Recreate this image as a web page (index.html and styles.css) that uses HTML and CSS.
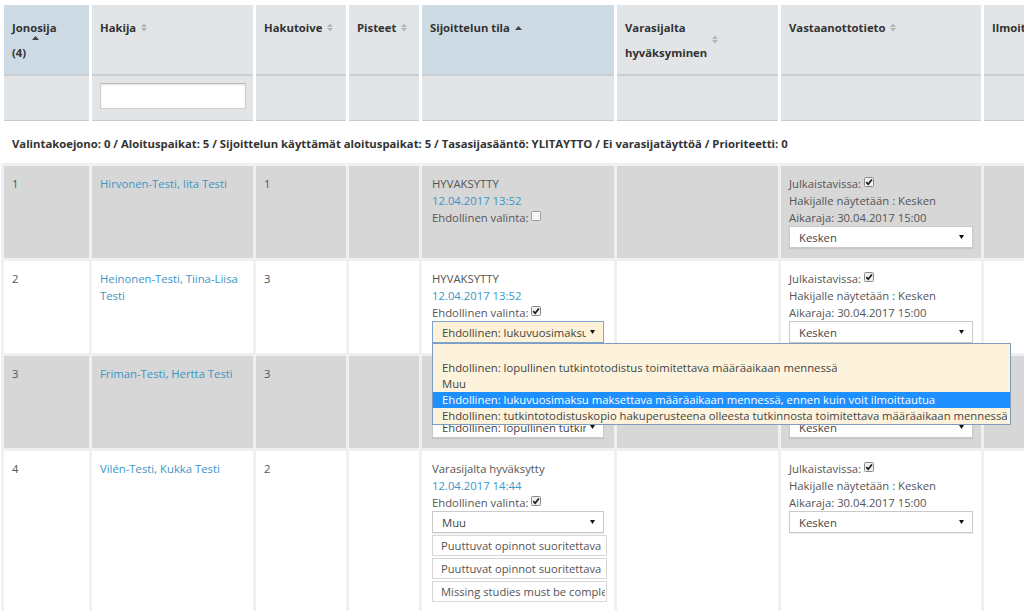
FILE: index.html
```html
<!DOCTYPE html>
<html lang="fi">
<head>
<meta charset="UTF-8" />
<title>Sijoittelun tulokset</title>
<link rel="stylesheet" href="styles.css">
</head>
<body>

<div class="page">
  <table class="grid head">
    <colgroup>
      <col class="c-jono"><col class="c-hakija"><col class="c-toive"><col class="c-pisteet">
      <col class="c-tila"><col class="c-vara"><col class="c-vast"><col class="c-ilmo">
    </colgroup>
    <tr class="titles">
      <th class="sorted">Jonosija<br>(4)
        <svg class="sort-abs sort-jono" width="7" height="4" viewBox="0 0 7 4"><path d="M0 4 L3.5 0 L7 4 Z" fill="#444"/></svg>
      </th>
      <th>Hakija <svg class="sort" width="6" height="9" viewBox="0 0 6 9"><path d="M0 4 L3 0.5 L6 4 Z M0 5 L3 8.5 L6 5 Z" fill="#b5b5b5"/></svg></th>
      <th>Hakutoive <svg class="sort" width="6" height="9" viewBox="0 0 6 9"><path d="M0 4 L3 0.5 L6 4 Z M0 5 L3 8.5 L6 5 Z" fill="#b5b5b5"/></svg></th>
      <th>Pisteet <svg class="sort" width="6" height="9" viewBox="0 0 6 9"><path d="M0 4 L3 0.5 L6 4 Z M0 5 L3 8.5 L6 5 Z" fill="#b5b5b5"/></svg></th>
      <th class="sorted">Sijoittelun tila <svg class="sort" width="7" height="4" viewBox="0 0 7 4"><path d="M0 4 L3.5 0 L7 4 Z" fill="#444"/></svg></th>
      <th>Varasijalta<br>hyväksyminen
        <svg class="sort-abs sort-vara" width="6" height="9" viewBox="0 0 6 9"><path d="M0 4 L3 0.5 L6 4 Z M0 5 L3 8.5 L6 5 Z" fill="#b5b5b5"/></svg>
      </th>
      <th>Vastaanottotieto <svg class="sort" width="6" height="9" viewBox="0 0 6 9"><path d="M0 4 L3 0.5 L6 4 Z M0 5 L3 8.5 L6 5 Z" fill="#b5b5b5"/></svg></th>
      <th>Ilmoittautumistila</th>
    </tr>
    <tr class="filters">
      <th></th>
      <th><input type="text" class="filter-input" /></th>
      <th></th><th></th><th></th><th></th><th></th><th></th>
    </tr>
  </table>

  <div class="queue-info">Valintakoejono: 0 / Aloituspaikat: 5 / Sijoittelun käyttämät aloituspaikat: 5 / Tasasijasääntö: YLITAYTTO / Ei varasijatäyttöä / Prioriteetti: 0</div>

  <table class="grid results">
    <colgroup>
      <col class="c-jono"><col class="c-hakija"><col class="c-toive"><col class="c-pisteet">
      <col class="c-tila"><col class="c-vara"><col class="c-vast"><col class="c-ilmo">
    </colgroup>

    <tr class="odd">
      <td>1</td>
      <td><a href="#">Hirvonen-Testi, Iita Testi</a></td>
      <td>1</td>
      <td></td>
      <td class="tila">
        <div>HYVAKSYTTY</div>
        <div class="date">12.04.2017 13:52</div>
        <div>Ehdollinen valinta: <svg class="cb" width="10" height="10" viewBox="0 0 10 10"><rect x=".5" y=".5" width="9" height="9" rx="1" fill="#f6f6f6" stroke="#9a9a9a"/></svg></div>
      </td>
      <td></td>
      <td>
        <div>Julkaistavissa: <svg class="cb" width="10" height="10" viewBox="0 0 10 10"><rect x=".5" y=".5" width="9" height="9" rx="1" fill="#f0f0f0" stroke="#8a8a8a"/><path d="M2.3 5.1 L4.2 7.2 L7.9 2.5" fill="none" stroke="#1a1a1a" stroke-width="1.7"/></svg></div>
        <div>Hakijalle näytetään : Kesken</div>
        <div>Aikaraja: 30.04.2017 15:00</div>
        <div class="select"><span class="select-text">Kesken</span><svg class="caret" width="5" height="4" viewBox="0 0 5 4"><path d="M0 0 L5 0 L2.5 4 Z" fill="#111"/></svg></div>
      </td>
      <td></td>
    </tr>

    <tr>
      <td>2</td>
      <td><a href="#">Heinonen-Testi, Tiina-Liisa Testi</a></td>
      <td>3</td>
      <td></td>
      <td class="tila">
        <div>HYVAKSYTTY</div>
        <div class="date">12.04.2017 13:52</div>
        <div>Ehdollinen valinta: <svg class="cb" width="10" height="10" viewBox="0 0 10 10"><rect x=".5" y=".5" width="9" height="9" rx="1" fill="#f0f0f0" stroke="#8a8a8a"/><path d="M2.3 5.1 L4.2 7.2 L7.9 2.5" fill="none" stroke="#1a1a1a" stroke-width="1.7"/></svg></div>
        <div class="select-wrap">
          <div class="select focused"><span class="select-text">Ehdollinen: lukuvuosimaksu maksettava määräaikaan mennessä</span><svg class="caret" width="5" height="4" viewBox="0 0 5 4"><path d="M0 0 L5 0 L2.5 4 Z" fill="#111"/></svg></div>
          <ul class="options">
            <li>&nbsp;</li>
            <li>Ehdollinen: lopullinen tutkintotodistus toimitettava määräaikaan mennessä</li>
            <li>Muu</li>
            <li class="active">Ehdollinen: lukuvuosimaksu maksettava määräaikaan mennessä, ennen kuin voit ilmoittautua</li>
            <li>Ehdollinen: tutkintotodistuskopio hakuperusteena olleesta tutkinnosta toimitettava määräaikaan mennessä</li>
          </ul>
        </div>
      </td>
      <td></td>
      <td>
        <div>Julkaistavissa: <svg class="cb" width="10" height="10" viewBox="0 0 10 10"><rect x=".5" y=".5" width="9" height="9" rx="1" fill="#f0f0f0" stroke="#8a8a8a"/><path d="M2.3 5.1 L4.2 7.2 L7.9 2.5" fill="none" stroke="#1a1a1a" stroke-width="1.7"/></svg></div>
        <div>Hakijalle näytetään : Kesken</div>
        <div>Aikaraja: 30.04.2017 15:00</div>
        <div class="select"><span class="select-text">Kesken</span><svg class="caret" width="5" height="4" viewBox="0 0 5 4"><path d="M0 0 L5 0 L2.5 4 Z" fill="#111"/></svg></div>
      </td>
      <td></td>
    </tr>

    <tr class="odd">
      <td>3</td>
      <td><a href="#">Friman-Testi, Hertta Testi</a></td>
      <td>3</td>
      <td></td>
      <td class="tila">
        <div>HYVAKSYTTY</div>
        <div class="date">12.04.2017 13:52</div>
        <div>Ehdollinen valinta: <svg class="cb" width="10" height="10" viewBox="0 0 10 10"><rect x=".5" y=".5" width="9" height="9" rx="1" fill="#f0f0f0" stroke="#8a8a8a"/><path d="M2.3 5.1 L4.2 7.2 L7.9 2.5" fill="none" stroke="#1a1a1a" stroke-width="1.7"/></svg></div>
        <div class="select"><span class="select-text">Ehdollinen: lopullinen tutkintotodistus</span><svg class="caret" width="5" height="4" viewBox="0 0 5 4"><path d="M0 0 L5 0 L2.5 4 Z" fill="#111"/></svg></div>
      </td>
      <td></td>
      <td>
        <div>Julkaistavissa: <svg class="cb" width="10" height="10" viewBox="0 0 10 10"><rect x=".5" y=".5" width="9" height="9" rx="1" fill="#f0f0f0" stroke="#8a8a8a"/><path d="M2.3 5.1 L4.2 7.2 L7.9 2.5" fill="none" stroke="#1a1a1a" stroke-width="1.7"/></svg></div>
        <div>Hakijalle näytetään : Kesken</div>
        <div>Aikaraja: 30.04.2017 15:00</div>
        <div class="select"><span class="select-text">Kesken</span><svg class="caret" width="5" height="4" viewBox="0 0 5 4"><path d="M0 0 L5 0 L2.5 4 Z" fill="#111"/></svg></div>
      </td>
      <td></td>
    </tr>

    <tr>
      <td>4</td>
      <td><a href="#">Vilén-Testi, Kukka Testi</a></td>
      <td>2</td>
      <td></td>
      <td class="tila">
        <div>Varasijalta hyväksytty</div>
        <div class="date">12.04.2017 14:44</div>
        <div>Ehdollinen valinta: <svg class="cb" width="10" height="10" viewBox="0 0 10 10"><rect x=".5" y=".5" width="9" height="9" rx="1" fill="#f0f0f0" stroke="#8a8a8a"/><path d="M2.3 5.1 L4.2 7.2 L7.9 2.5" fill="none" stroke="#1a1a1a" stroke-width="1.7"/></svg></div>
        <div class="select"><span class="select-text">Muu</span><svg class="caret" width="5" height="4" viewBox="0 0 5 4"><path d="M0 0 L5 0 L2.5 4 Z" fill="#111"/></svg></div>
        <input type="text" class="reason" value="Puuttuvat opinnot suoritettava määräaikaan mennessä" />
        <input type="text" class="reason" value="Puuttuvat opinnot suoritettava määräaikaan mennessä" />
        <input type="text" class="reason" value="Missing studies must be completed by the deadline" />
      </td>
      <td></td>
      <td>
        <div>Julkaistavissa: <svg class="cb" width="10" height="10" viewBox="0 0 10 10"><rect x=".5" y=".5" width="9" height="9" rx="1" fill="#f0f0f0" stroke="#8a8a8a"/><path d="M2.3 5.1 L4.2 7.2 L7.9 2.5" fill="none" stroke="#1a1a1a" stroke-width="1.7"/></svg></div>
        <div>Hakijalle näytetään : Kesken</div>
        <div>Aikaraja: 30.04.2017 15:00</div>
        <div class="select"><span class="select-text">Kesken</span><svg class="caret" width="5" height="4" viewBox="0 0 5 4"><path d="M0 0 L5 0 L2.5 4 Z" fill="#111"/></svg></div>
      </td>
      <td></td>
    </tr>
  </table>
</div>

</body>
</html>
```

FILE: styles.css
```css
* {
  box-sizing: border-box;
}
body {
  margin: 0;
  font-family: 'Open Sans', 'Noto Sans', sans-serif;
  font-size: 11.3px;
  color: #555;
  background: #fff;
  overflow: hidden;
}
.page {
  width: 1024px;
  height: 611px;
  overflow: hidden;
  padding: 5px 0 0 1px;
}
.grid {
  table-layout: fixed;
  width: 1136px;
}
.c-jono { width: 85px; }
.c-hakija { width: 161px; }
.c-toive { width: 90px; }
.c-pisteet { width: 70px; }
.c-tila { width: 192px; }
.c-vara { width: 161px; }
.c-vast { width: 200px; }
.c-ilmo { width: 150px; }

/* header */
.head {
  border-collapse: separate;
  border-spacing: 3px 0;
}
.head th {
  text-align: left;
  vertical-align: top;
  font-weight: 700;
  color: #333;
  background-color: #dfe2e4;
  background-image: repeating-conic-gradient(rgba(255, 255, 255, 0.18) 0 25%, transparent 0 50%);
  background-size: 2px 2px;
  position: relative;
  white-space: nowrap;
  overflow: hidden;
}
.titles th {
  padding: 10px 8px 7px;
  line-height: 25px;
  height: 71px;
  border-bottom: 2px solid #cbced0;
}
.titles th.sorted {
  background-color: #c8d7e1;
}
.filters th {
  height: 45px;
  padding: 7px 8px 0;
  border-bottom: 1px solid #c9cccd;
}
.sort {
  vertical-align: middle;
  margin-left: 2px;
  margin-top: -2px;
}
.sort-abs {
  position: absolute;
}
.sort-jono {
  left: 28px;
  top: 31px;
}
.sort-vara {
  left: 95px;
  top: 30px;
}
.filter-input {
  width: 146px;
  height: 26px;
  border: 1px solid #d0d0d0;
  border-top-color: #b8b8b8;
  box-shadow: inset 0 1px 2px rgb(0 0 0 / 0.12);
  background: #fff;
  font-family: inherit;
}

.queue-info {
  font-weight: 700;
  color: #333;
  line-height: 17px;
  padding: 14px 11px 11px;
  white-space: nowrap;
}

/* results */
.results {
  border-collapse: separate;
  border-spacing: 3px;
  background: #f0f0f0;
}
.results td {
  vertical-align: top;
  padding: 9px 8px 10px;
  line-height: 17px;
  background: #fff;
  white-space: nowrap;
}
.results td:nth-child(2) {
  white-space: normal;
}
.results tr.odd td {
  background: #d7d7d7;
}
.results td.tila {
  padding-left: 10px;
  padding-right: 10px;
}
.results a {
  color: #3a96c6;
  text-decoration: none;
}
.date {
  color: #3a96c6;
}
.cb {
  vertical-align: 1px;
}

.select {
  display: flex;
  align-items: center;
  height: 22px;
  padding: 0 8px 0 9px;
  background: #fff;
  border: 1px solid #c9c9c9;
  box-shadow: 0 1px 1px rgb(0 0 0 / 0.08);
  font-size: 11.3px;
  color: #444;
}
.select-text {
  flex: 1;
  overflow: hidden;
  white-space: nowrap;
}
.caret {
  flex: none;
  margin-left: 4px;
}
.select.focused {
  background: #fdf1d8;
  border-color: #7ea6d2;
}
.select-wrap {
  position: relative;
}
.options {
  position: absolute;
  top: 100%;
  left: 0;
  z-index: 5;
  margin: 0;
  padding: 0;
  list-style: none;
  background: #fdf3dc;
  border: 1px solid #7e9cbd;
  color: #444;
  line-height: 16px;
  white-space: nowrap;
}
.options li {
  padding: 0 2px 0 9px;
}
.options li.active {
  background: #1e8fff;
  color: #fff;
}
.reason {
  display: block;
  width: 175px;
  height: 21px;
  margin-top: 2px;
  padding: 0 1px 0 8px;
  border: 1px solid #d6d6d6;
  background: #fff;
  font-family: inherit;
  font-size: 11.2px;
  color: #555;
}
```
